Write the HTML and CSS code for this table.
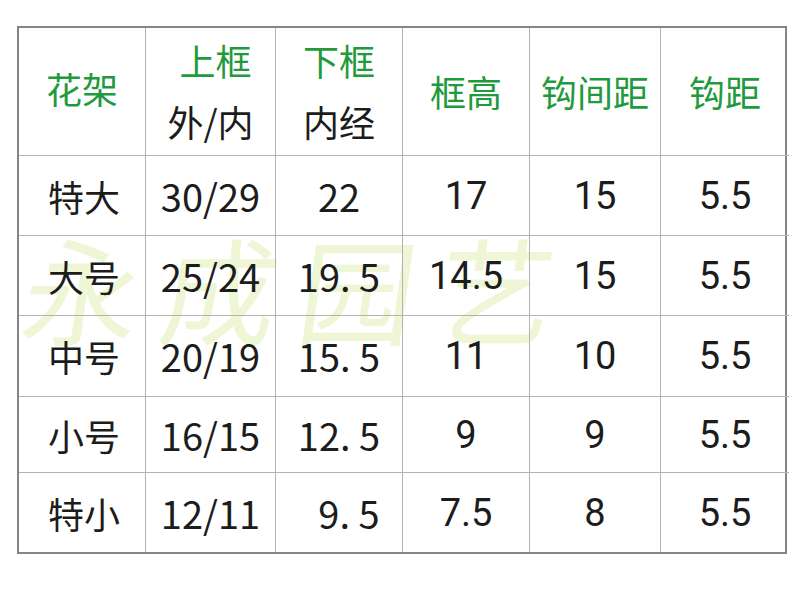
FILE: index.html
```html
<!DOCTYPE html>
<html lang="zh">
<head>
<meta charset="utf-8">
<link rel="stylesheet" href="styles.css">
</head>
<body>
<div class="page">
  <div class="sheet">
    <div class="watermark">永成园艺</div>
    <div class="grid">
      <div class="cell head up">花架</div>
      <div class="cell head two"><span class="g shift">上框</span><span class="k">外/内</span></div>
      <div class="cell head two"><span class="g">下框</span><span class="k">内经</span></div>
      <div class="cell head low">框高</div>
      <div class="cell head low">钩间距</div>
      <div class="cell head low lastc">钩距</div>

      <div class="cell name">特大</div>
      <div class="cell cjk">30/29</div>
      <div class="cell cjk">22</div>
      <div class="cell num">17</div>
      <div class="cell num">15</div>
      <div class="cell num lastc">5.5</div>

      <div class="cell name">大号</div>
      <div class="cell cjk">25/24</div>
      <div class="cell cjk">19. 5</div>
      <div class="cell num">14.5</div>
      <div class="cell num">15</div>
      <div class="cell num lastc">5.5</div>

      <div class="cell name">中号</div>
      <div class="cell cjk">20/19</div>
      <div class="cell cjk">15. 5</div>
      <div class="cell num">11</div>
      <div class="cell num">10</div>
      <div class="cell num lastc">5.5</div>

      <div class="cell name">小号</div>
      <div class="cell cjk">16/15</div>
      <div class="cell cjk">12. 5</div>
      <div class="cell num">9</div>
      <div class="cell num">9</div>
      <div class="cell num lastc">5.5</div>

      <div class="cell name lastr">特小</div>
      <div class="cell cjk lastr">12/11</div>
      <div class="cell cjk lastr pad9">9. 5</div>
      <div class="cell num lastr">7.5</div>
      <div class="cell num lastr">8</div>
      <div class="cell num lastr lastc">5.5</div>
    </div>
  </div>
</div>
</body>
</html>
```

FILE: styles.css
```css
html, body {
  margin: 0;
  padding: 0;
  background: #ffffff;
}
body {
  width: 800px;
  height: 600px;
  overflow: hidden;
  font-family: "Noto Sans CJK SC", "Noto Sans", sans-serif;
  color: #1c1c1c;
}
.page {
  padding: 26px 0 0 17px;
}
.sheet {
  position: relative;
  width: 770px;
}
.watermark {
  position: absolute;
  left: 8px;
  top: 198px;
  font-family: "Noto Sans CJK SC", sans-serif;
  font-size: 116px;
  line-height: 124px;
  letter-spacing: 22px;
  color: #eff6d6;
  white-space: nowrap;
  transform: skewX(-8deg);
  z-index: 0;
}
.grid {
  position: relative;
  z-index: 1;
  display: grid;
  grid-template-columns: 127px 130px 127px 127px 131px 128px;
  grid-template-rows: 128px 80px 80px 81px 76px 79px;
  border: 2px solid #858585;
  box-sizing: border-box;
  width: 770px;
}
.cell {
  display: flex;
  align-items: center;
  justify-content: center;
  border-right: 1px solid #b3b3b3;
  border-bottom: 1px solid #b3b3b3;
  font-size: 36px;
  line-height: 1;
  white-space: pre;
}
.lastc { border-right: none; }
.lastr { border-bottom: none; }
.head {
  color: #1f9a3c;
}
.head.up {
  padding-bottom: 8px;
}
.head.low {
  padding-bottom: 2px;
}
.two {
  flex-direction: column;
  gap: 25px;
  padding-bottom: 2px;
}
.two .g { color: #1f9a3c; }
.two .k { color: #1c1c1c; }
.shift { margin-left: 10px; }
.name {
  padding-left: 4px;
}
.cjk {
  font-family: "Noto Sans CJK SC", sans-serif;
  font-size: 38px;
}
.num {
  font-family: Roboto, "Liberation Sans", sans-serif;
  font-size: 38px;
}
.pad9 { padding-left: 20px; }
```
